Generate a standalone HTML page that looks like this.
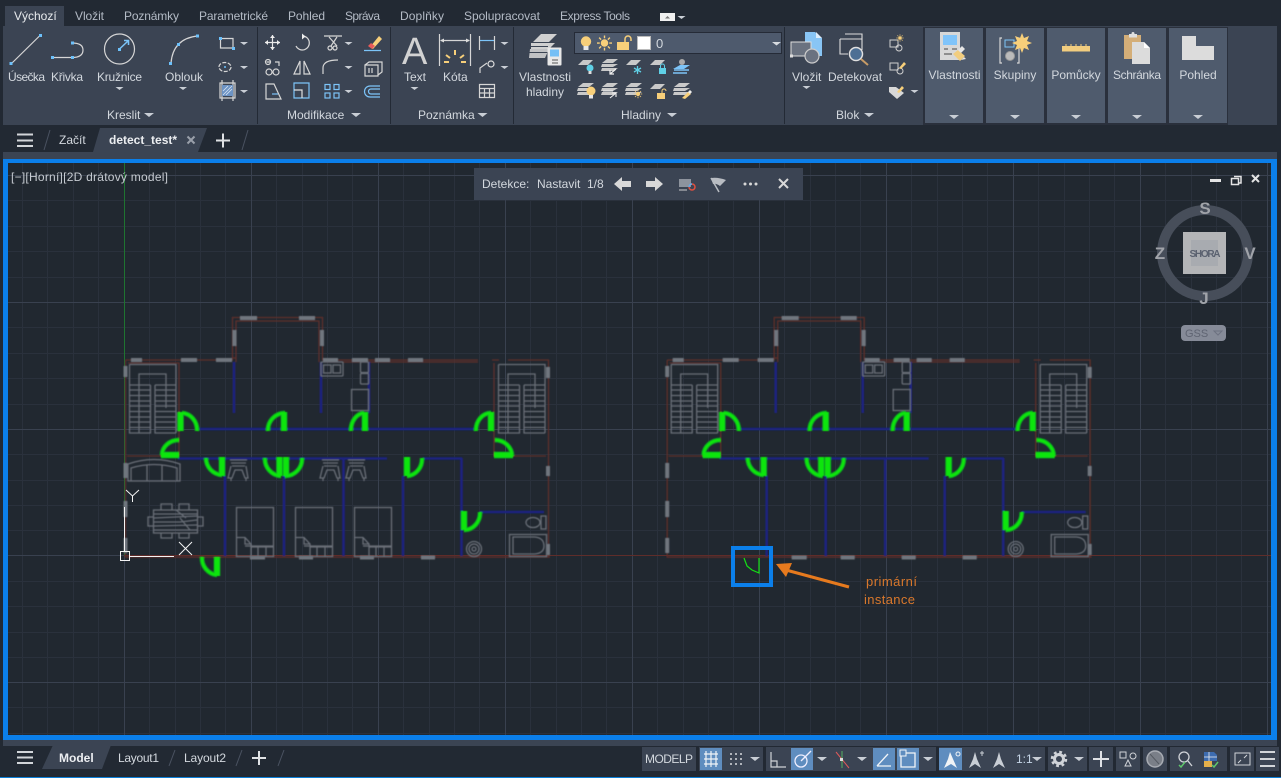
<!DOCTYPE html>
<html><head><meta charset="utf-8"><title>detect_test</title>
<style>
html,body{margin:0;padding:0;background:#222933;width:1281px;height:778px;overflow:hidden}
svg{display:block;position:absolute;left:0;top:0}
text{font-family:"Liberation Sans","DejaVu Sans",sans-serif;font-size:12px;fill:#d3d8de}
.tab{fill:#b4bbc6}
.c{text-anchor:middle}
.ic{fill:none;stroke:#d6d6d6;stroke-width:1.2}
.b{fill:none;stroke:#7cc4f8;stroke-width:1.2}
.st{fill:none;stroke:#cfd2d6;stroke-width:1.2}
</style></head><body>
<svg width="1281" height="778" viewBox="0 0 1281 778">
<defs>
<filter id="soft" x="-2%" y="-2%" width="104%" height="104%"><feGaussianBlur stdDeviation="0.4"/></filter>
<path id="car" d="M-4 0h8l-4 3z" fill="#c9ced5"/>
<path id="caw" d="M-5 0h10l-5 4z" fill="#c9ced5"/>
<g id="lay"><path d="M4 0h10l-5 5H-1z" fill="#c9c9c9"/></g>
<g id="lay3" fill="#c9c9c9"><path d="M5 0h11l-5 4H0z"/><path d="M0 5h16l-5 3H-1zM0 9h16l-5 3H-1z"/></g>
<g id="bulb"><circle cx="0" cy="0" r="4.500" fill="#f7cf7a"/><rect x="-2" y="4" width="4" height="3.500" fill="#e8e8e8"/></g>
<g id="sunm" stroke="#f7cf7a" stroke-width="1.100"><circle r="3" fill="#f7cf7a" stroke="none"/><path d="M0-6v2.200M0 6V3.800M-6 0h2.200M6 0H3.800M-4.300-4.300l1.600 1.600M4.300-4.300L2.700-2.700M-4.300 4.300l1.600-1.600M4.300 4.300L2.700 2.700"/></g>
<g id="stair" fill="none" stroke="#696e77" stroke-width="1.300">
<path d="M.5 .5H47V69M.5 .5V69H21.500V21M47 69H26V21M10 21V10H37V21M.5 21H21.500M26 21H47M10 21V69M37 21V44"/>
<path d="M.5 26H21.500M.5 31.500H21.500M.5 37H21.500M.5 42H21.500M.5 47.500H21.500M.5 53H21.500M.5 58H21.500M.5 63.500H21.500M26 26H47M26 31.500H47M26 37H47M26 42H47M26 47.500H47M26 53H47M26 58H47M26 63.500H47"/>
</g>
<g id="common">
<g fill="none" stroke="#5f2d2a" stroke-width="1.300">
<path d="M125.500 360H232.500V317.500H322.500V360H478M492 360H499M508 360H548.500V557M125.500 360V557H548.500"/>
<path d="M128 363H179V456H127M236 362V321H319V362M494 363V456H546M550 557H125"/>
<path d="M236 358H232M325 362H478"/>
</g>
<g fill="none" stroke="#1c2280" stroke-width="2.600">
<path d="M234 362V413M321 362V413M369 362V413M197 429H475M178 458.500H387M423 458.500H462M225 476V556M284 476V556M343.500 458V556M403 476V556M461.500 458V556M480 512H544"/>
</g>
<g fill="#70767e">
<rect x="131" y="358" width="11" height="4"/><rect x="181" y="358" width="16" height="4"/><rect x="216" y="358" width="16" height="4"/>
<rect x="240" y="316" width="17" height="4"/><rect x="299" y="316" width="16" height="4"/>
<rect x="232.500" y="330" width="4" height="16"/><rect x="320" y="330" width="4" height="16"/>
<rect x="123.500" y="366" width="4" height="11"/><rect x="123.500" y="463" width="4" height="15"/><rect x="123.500" y="501" width="4" height="16"/><rect x="123.500" y="538" width="4" height="15"/>
<rect x="250" y="555.500" width="15" height="4"/><rect x="299" y="555.500" width="14" height="4"/><rect x="360" y="555.500" width="14" height="4"/><rect x="421" y="555.500" width="14" height="4"/>
<rect x="323" y="358" width="15" height="4"/><rect x="352" y="358" width="16" height="4"/><rect x="375" y="358" width="15" height="4"/><rect x="408" y="358" width="15" height="4"/>
<rect x="546" y="367" width="4" height="11"/><rect x="546" y="466" width="4" height="10"/><rect x="546" y="544" width="4" height="11"/>
</g>
<use href="#stair" x="129" y="364"/><use href="#stair" x="498" y="364"/>
<g fill="none" stroke="#696e77" stroke-width="1.300">
<rect x="321" y="362" width="22" height="14" rx="1"/><rect x="323.500" y="365" width="7.500" height="8"/><rect x="333" y="365" width="7.500" height="8"/>
<rect x="360.500" y="362" width="8" height="10.500" rx="1"/><rect x="360.500" y="373.500" width="8" height="10.500" rx="1"/>
<rect x="351.500" y="389.500" width="17" height="21"/>
<rect x="541" y="516" width="5" height="13"/><ellipse cx="533" cy="522.500" rx="7" ry="5"/>
<rect x="509.500" y="534.500" width="37" height="22"/><path d="M513 537H535Q544 538 544 546Q544 553 535 554H513Z"/>
<circle cx="474" cy="549" r="7.500"/><circle cx="474" cy="549" r="5"/><circle cx="474" cy="549" r="2"/>
</g>
</g>
<path id="leaf" d="M180.500 412V431M284 412V431M161 455H179M222 457V476M279.500 457V476M286 457V476M365 412V431M491 412V431M494 455H513M407 457V476M464 511V530"/>
<path id="arc" d="M182 413A16 17 0 0 1 197 431M285 413A17 17 0 0 0 268 431M179 440A17 15 0 0 0 162 455M206 458A17 17 0 0 0 222 475M265 458A17 17 0 0 0 281 476M302 458A17 17 0 0 1 285 476M364 413A14 17 0 0 0 351 431M476 431A15 17 0 0 1 491 413M495 440A17 16 0 0 1 512 456M422 458A16 17 0 0 1 407 476M480 512A16 17 0 0 1 464 530"/>
<g id="doors" fill="none">
<use href="#arc" stroke="#0c9a22" stroke-width="5"/>
<use href="#leaf" stroke="#0c9a22" stroke-width="7"/>
<use href="#arc" stroke="#10e510" stroke-width="2.800"/>
<use href="#leaf" stroke="#10e510" stroke-width="5"/>
</g>
</defs>

<rect width="1281" height="778" fill="#222933"/>
<rect x="5" y="6" width="59" height="21" fill="#3b4453"/>
<text x="14" y="20" style="fill:#e8ebee">Výchozí</text>
<text class="tab" x="75" y="20" textLength="29">Vložit</text>
<text class="tab" x="124" y="20" textLength="55">Poznámky</text>
<text class="tab" x="199" y="20" textLength="69">Parametrické</text>
<text class="tab" x="288" y="20" textLength="37">Pohled</text>
<text class="tab" x="345" y="20" textLength="35">Správa</text>
<text class="tab" x="400" y="20" textLength="44">Doplňky</text>
<text class="tab" x="464" y="20" textLength="76">Spolupracovat</text>
<text class="tab" x="560" y="20" textLength="70">Express Tools</text>
<rect x="660" y="13" width="15" height="8" fill="#f0f0f0"/><path d="M665 18.500h5l-2.500-2.500z" fill="#777"/>
<use href="#car" x="681.500" y="16"/>

<rect x="3" y="26" width="1274" height="99" fill="#3b4453"/>
<rect x="923" y="27" width="305" height="98" fill="#2a303c"/>
<rect x="1228" y="26" width="49" height="99" fill="#3b4453"/>
<g fill="#4f5b6d"><rect x="925" y="28" width="58" height="95"/><rect x="986" y="28" width="58" height="95"/><rect x="1047" y="28" width="58" height="95"/><rect x="1108" y="28" width="58" height="95"/><rect x="1169" y="28" width="58" height="95"/></g>
<g fill="#232a35"><rect x="257" y="27" width="1" height="97"/><rect x="390" y="27" width="1" height="97"/><rect x="513" y="27" width="1" height="97"/><rect x="784" y="27" width="1" height="97"/></g>

<g class="ic"><path d="M11.500 63.500L40 35.500"/><path d="M53 57.500H72M72 43Q83 43 83 50Q83 57.500 72 57.500"/><circle cx="119.500" cy="49" r="15"/><path d="M171 63Q173 39 197 36"/></g>
<path d="M119.500 49L128 41M124 40.500h4.500v4.500" fill="none" stroke="#7cc4f8" stroke-width="1.500"/>
<g fill="#6cc0fa"><rect x="9.500" y="62" width="3" height="3"/><rect x="39" y="34" width="3" height="3"/><rect x="51" y="56" width="3" height="3"/><rect x="71" y="56" width="3" height="3"/><rect x="71" y="41.500" width="3" height="3"/><rect x="118" y="48" width="3" height="3"/><rect x="169" y="62" width="3" height="3"/><rect x="177" y="43" width="3" height="3"/><rect x="196" y="34.500" width="3" height="3"/></g>
<text x="8" y="81" textLength="37">Úsečka</text><text x="51" y="81" textLength="32">Křivka</text><text x="97" y="81" textLength="45">Kružnice</text><text x="165" y="81" textLength="38">Oblouk</text>
<use href="#car" x="119.500" y="87"/><use href="#car" x="183" y="87"/>
<path class="ic" d="M220.500 38.500H233V48H220.500Z"/><rect x="219" y="37" width="3" height="3" fill="#6cc0fa"/><rect x="232" y="47" width="3" height="3" fill="#6cc0fa"/>
<ellipse class="ic" cx="225" cy="67" rx="6" ry="4.500" stroke-dasharray="4 1.500"/><circle cx="225" cy="67" r="1" fill="#6cc0fa"/>
<path class="ic" d="M220 83H235V98H220ZM222 80V101M233 80V101"/><rect x="222" y="85" width="11" height="11" fill="#6c93c4"/><path d="M223 95l9-9M226 95l6-6M223 91l5-5" stroke="#d7e4f3" stroke-width=".8"/>
<use href="#car" x="244" y="42"/><use href="#car" x="244" y="66"/><use href="#car" x="244" y="90"/>
<text x="107" y="119">Kreslit</text><use href="#caw" x="149" y="113"/>

<g class="ic" stroke-width="1.300">
<path d="M265 42.500H280M272.500 35V50" stroke="#e8e8e8"/>
<path d="M302 36A7 7 0 1 1 296 46"/>
<path d="M324 36H342M329 37L337 46M337 37L331 46"/><circle cx="330" cy="48" r="2"/><circle cx="335" cy="48" r="2"/>
<path d="M266.500 62h4M275 62h4v4"/><circle cx="268" cy="62" r="2.500"/><circle cx="269" cy="72" r="3"/><circle cx="276" cy="72" r="3"/>
<path d="M300 74L300 61L294 74ZM304 74V61L310 74Z"/>
<path d="M323 74V68Q323 60 338 60"/>
<path d="M365 65h13v11h-13zM365 65l4-3h13v10l-4 3M369 68v5M372 68v5"/>
<path d="M266 84h8l7 15h-15z"/><path d="M272 94h6" stroke="#7cc4f8"/>
</g>
<path d="M265 42.500l3-2.500v5zM280 42.500l-3-2.500v5zM272.500 35l-2.500 3h5zM272.500 50l-2.500-3h5z" fill="#eee"/>
<path d="M302 33.500v6l3.500-3z" fill="#eee"/>
<path d="M294 83h15v15h-15z" fill="none" stroke="#7cc4f8" stroke-width="1.200"/><path d="M294 90h8v8" fill="none" stroke="#e0e0e0" stroke-width="1.200"/>
<g fill="none" stroke="#7cc4f8" stroke-width="1.200"><rect x="325" y="84.500" width="5" height="5"/><rect x="334" y="84.500" width="5" height="5"/><rect x="325" y="93" width="5" height="5"/><rect x="334" y="93" width="5" height="5"/><path d="M380 86h-10a5 5 0 0 0 0 11h10M380 89h-9a2.500 2.500 0 0 0 0 5h9"/></g>
<path d="M370 47l9-11 3 3-9 10z" fill="#f7cf7a"/><path d="M368 46l3-3 4 3-3 3z" fill="#e85a5a"/><path d="M364 50.500h17" stroke="#7cc4f8" stroke-width="1.200"/>
<use href="#car" x="348.500" y="42"/><use href="#car" x="348.500" y="66"/><use href="#car" x="348.500" y="90"/>
<text x="287" y="119">Modifikace</text><use href="#caw" x="356" y="113"/>

<text x="402" y="64" style="font-size:38px;fill:#d2d2d2">A</text>
<text x="404" y="81">Text</text><use href="#car" x="414.500" y="87"/>
<path d="M439.500 34V66M470.500 34V66M441 40.500H469" class="ic"/><path d="M440 40.500l4-2v4zM470 40.500l-4-2v4z" fill="#ddd"/>
<path d="M455 50v5M446 55l4 3M464 55l-4 3M444 62h5M461 62h5" stroke="#f7cf7a" stroke-width="2"/>
<text x="443" y="81">Kóta</text>
<path d="M479.500 36V50M494.500 36V50" class="ic"/><path d="M480 40.500H494" class="b"/>
<path d="M480 73V68L487 63" class="ic"/><circle cx="491" cy="64" r="3" fill="none" stroke="#ddd" stroke-width="1.200"/>
<path class="ic" d="M479.500 84.500H494.500V97.500H479.500ZM479.500 88.500H494.500M479.500 93H494.500M484.500 88.500V97.500M489.500 88.500V97.500"/>
<use href="#car" x="504.500" y="42"/><use href="#car" x="504.500" y="66"/>
<text x="418" y="119">Poznámka</text><use href="#caw" x="482.500" y="113"/>

<g fill="#d0d0d0"><path d="M541 34h16l-8 8h-16z"/><path d="M531 43h24l-6 6h-18z"/><path d="M530 49h19l-4 9h-16z" opacity=".9"/></g>
<path d="M529 46.500H548M529 52.500H548" stroke="#3b4453"/>
<rect x="547.500" y="47.500" width="14" height="18" rx="1" fill="#e8e8e8"/><rect x="550" y="49.500" width="9" height="7" fill="#74bff5"/><path d="M552 60h6M552 63h6" stroke="#555"/>
<text x="545" y="81" class="c">Vlastnosti</text><text x="545" y="96" class="c">hladiny</text>
<rect x="574.500" y="32.500" width="207" height="21" fill="#4e5a6d" stroke="#252b37"/>
<circle cx="586" cy="41.500" r="5.200" fill="#f7cf7a"/><rect x="583.500" y="46" width="5" height="4" fill="#e8e8e8"/>
<g transform="translate(604.500 43) scale(1.250)"><use href="#sunm"/></g>
<path d="M617 42h12v8h-12z" fill="#f7cf7a"/><path d="M625 42v-3a3 3 0 0 1 6 0v2" fill="none" stroke="#f7cf7a" stroke-width="1.500"/>
<rect x="637.500" y="36.500" width="13" height="13" fill="#fff" stroke="#bbb"/>
<text x="656" y="48" style="font-size:13px">0</text>
<path d="M772 42h9l-4.500 3.500z" fill="#d7dbe0"/>
<use href="#lay" x="579" y="60"/><circle cx="590" cy="68" r="3.500" fill="#5fd0e6"/><rect x="588.500" y="71" width="3" height="3" fill="#ddd"/>
<use href="#lay3" x="602" y="59"/><path d="M616 69l-6 5M610 70v4h4" stroke="#eee" fill="none" stroke-width="1.200"/>
<use href="#lay" x="627" y="60"/><path d="M637.500 66v8M634 68l7 4M641 68l-7 4" stroke="#5fd0e6" stroke-width="1.300"/>
<use href="#lay" x="651" y="60"/><rect x="659" y="68" width="7" height="6" fill="#5fd0e6"/><path d="M660.500 68v-2a2 2 0 0 1 4 0v2" fill="none" stroke="#5fd0e6"/>
<circle cx="682" cy="62" r="3" fill="#aaa"/><path d="M680 65h10l-6 4h-11z" fill="#7cc4f8"/><path d="M674 70h15M673 73h14" stroke="#7cc4f8" stroke-width="1.500"/>
<use href="#lay3" x="578" y="83"/><use href="#bulb" x="591" y="91"/>
<use href="#lay3" x="602" y="83"/><path d="M603 91h10M616 93l-6 5M612 93h4v4" stroke="#eee" fill="none" stroke-width="1.100"/>
<use href="#lay3" x="626" y="83"/><g transform="translate(638 94) scale(.7)"><use href="#sunm"/></g>
<use href="#lay" x="651" y="84"/><rect x="657" y="93" width="8" height="6" fill="#f7cf7a"/><path d="M662 93v-2a2 2 0 0 1 4 0" fill="none" stroke="#f7cf7a"/>
<use href="#lay3" x="674" y="83"/><path d="M682 98l6-6 3 2-6 5z" fill="#f7cf7a"/><path d="M688 92l2-2 2 2-2 2z" fill="#eee"/>
<text x="621" y="119">Hladiny</text><use href="#caw" x="672" y="113"/>

<path d="M805 32h10l7 6v18l-17 0z" fill="#88c5f5"/><path d="M816 32l6 6h-6z" fill="#dfeefb"/>
<rect x="791" y="42" width="20" height="14" fill="#6a7280" stroke="#ddd"/><circle cx="812" cy="56" r="7" fill="#6a7280" stroke="#ccc" stroke-width="1.200"/><rect x="790" y="54.500" width="3" height="3" fill="#ddd"/>
<text x="792" y="81">Vložit</text><use href="#car" x="806.500" y="86"/>
<path d="M845 34h17v16M840 39h22" fill="none" stroke="#ddd" stroke-width="1.100"/><path d="M840 39v15h8" fill="none" stroke="#ddd" stroke-width="1.100"/>
<circle cx="856" cy="54" r="6.500" fill="#4d6f94" stroke="#e0e0e0" stroke-width="1.500"/><path d="M861 59l7 6" stroke="#c79b66" stroke-width="2"/>
<text x="828" y="81">Detekovat</text>
<g fill="none" stroke="#cfcfcf"><path d="M890 40h8v7h-8zM890 63h8v7h-8z"/><circle cx="899" cy="48" r="3"/><circle cx="900" cy="71" r="3"/></g>
<g transform="translate(900 38) scale(.6)"><use href="#sunm"/></g>
<path d="M899 68l5-6 2 2-5 5z" fill="#f7cf7a"/><path d="M889 87h7l8 6-7 6-8-7z" fill="#d8d8d8"/><path d="M897 92l5-6 2 2-5 5z" fill="#f7cf7a"/>
<use href="#car" x="914.500" y="90"/>
<text x="836" y="119">Blok</text><use href="#caw" x="869" y="113"/>

<rect x="940" y="32" width="20" height="28" fill="#d8d8d8"/><rect x="943" y="35" width="14" height="10" fill="#80c4fa"/><path d="M944 49h4M952 49h5M944 54h8" stroke="#444"/><path d="M953 54l7 7 5-5-7-6z" fill="#f2cd7f"/><path d="M958 50l4-4 3 3-4 4zM961 60l3-3 2 2z" fill="#e6e6e6"/>
<path d="M1002 38h-2v25h2M1017 38h2v25h-2" class="ic"/><rect x="1005" y="40" width="9" height="7" fill="none" stroke="#7cc4f8"/><circle cx="1010" cy="56" r="4.500" fill="#bbb" stroke="#999"/>
<path d="M1022 33l2 5 5-2-2 5 5 2-5 2 2 5-5-2-2 5-2-5-5 2 2-5-5-2 5-2-2-5 5 2z" fill="#f7cf7a"/>
<rect x="1062" y="46" width="28" height="5.500" fill="#f2cd7f"/><path d="M1066 46v-2M1071 46v-2M1076 46v-2M1081 46v-2M1086 46v-2" stroke="#f2cd7f"/>
<rect x="1124" y="35" width="17" height="24" fill="#d4ae78"/><rect x="1129" y="34" width="8" height="3.500" fill="#e0e0e0"/><circle cx="1133" cy="33.500" r="1.500" fill="#e0e0e0"/><path d="M1132 42h12l6 6v16h-18z" fill="#dcdcdc"/><path d="M1144 42l6 6h-6z" fill="#fff"/>
<path d="M1182 36h14v10h18v14h-32z" fill="#dcdcdc"/>
<text x="954.500" y="79" class="c">Vlastnosti</text><text x="1015" y="79" class="c">Skupiny</text><text x="1076" y="79" class="c">Pomůcky</text><text x="1137" y="79" class="c" textLength="48">Schránka</text><text x="1198" y="79" class="c">Pohled</text>
<use href="#caw" x="954" y="115"/><use href="#caw" x="1015" y="115"/><use href="#caw" x="1076" y="115"/><use href="#caw" x="1137" y="115"/><use href="#caw" x="1198" y="115"/>

<path d="M17 134.500H33M17 140.500H33M17 146H33" stroke="#d2d5d9" stroke-width="2"/>
<path d="M44 150L50 130" stroke="#4a5261"/>
<text x="59" y="144">Začít</text>
<path d="M93 152L100 128H207L198 152Z" fill="#3b4453"/>
<text x="109" y="144" style="font-weight:bold;fill:#eceef1">detect_test*</text>
<path d="M187.500 136.500L194.500 143.500M194.500 136.500L187.500 143.500" stroke="#9aa0aa" stroke-width="2"/>
<path d="M216 140.500H230M223 133.500V147.500" stroke="#e0e2e5" stroke-width="2"/>
<path d="M242 150L248 130" stroke="#4a5261"/>

<rect x="3" y="152" width="1274" height="7" fill="#3b4453"/>
<rect x="3" y="159" width="1274" height="581" fill="#0b7fea"/>
<rect x="8" y="163" width="1263" height="572" fill="#212830"/>

<svg x="8" y="163" width="1263" height="572" viewBox="8 163 1263 572">
<path fill="none" stroke="#2a313c" d="M22.500 163V735M47.500 163V735M73.500 163V735M98.500 163V735M149.500 163V735M175.500 163V735M200.500 163V735M225.500 163V735M276.500 163V735M302.500 163V735M327.500 163V735M352.500 163V735M403.500 163V735M429.500 163V735M454.500 163V735M479.500 163V735M530.500 163V735M556.500 163V735M581.500 163V735M606.500 163V735M657.500 163V735M683.500 163V735M708.500 163V735M733.500 163V735M784.500 163V735M810.500 163V735M835.500 163V735M860.500 163V735M911.500 163V735M937.500 163V735M962.500 163V735M987.500 163V735M1038.500 163V735M1064.500 163V735M1089.500 163V735M1114.500 163V735M1165.500 163V735M1191.500 163V735M1216.500 163V735M1241.500 163V735M8 200.500H1271M8 226.500H1271M8 251.500H1271M8 277.500H1271M8 327.500H1271M8 353.500H1271M8 378.500H1271M8 404.500H1271M8 454.500H1271M8 480.500H1271M8 505.500H1271M8 530.500H1271M8 581.500H1271M8 606.500H1271M8 632.500H1271M8 657.500H1271M8 707.500H1271M8 733.500H1271"/>
<path fill="none" stroke="#39414f" d="M251.500 163V735M378.500 163V735M505.500 163V735M632.500 163V735M759.500 163V735M886.500 163V735M1013.500 163V735M1140.500 163V735M1267.500 163V735M8 175.500H1271M8 302.500H1271M8 429.500H1271M8 682.500H1271M8 555.500H124M124.500 556V735"/>
<path d="M124.500 163V556" stroke="#1f7430" fill="none"/>
<path d="M124 555.500H1271" stroke="#5f2d2a" fill="none"/>

<g filter="url(#soft)">
<use href="#common"/>
<use href="#common" x="541.700"/>
<use href="#doors"/>
<use href="#doors" x="541.700"/>
<path d="M217 557V576" stroke="#0c9a22" stroke-width="7" fill="none"/><path d="M202 557A17 17 0 0 0 217 575" stroke="#0c9a22" stroke-width="5" fill="none"/>
<path d="M217 557V576" stroke="#10e510" stroke-width="5" fill="none"/><path d="M202 557A17 17 0 0 0 217 575" stroke="#10e510" stroke-width="2.800" fill="none"/>

<g fill="none" stroke="#696e77" stroke-width="1.300">
<path d="M128 481V464Q154 455 180 464V481M128 466V481H180V466M131 481V468Q154 461 177 468V481M147 465V481M162 465V481"/>
<g id="ch"><path d="M230 460H247M231 463H246M232 466H245M231 466L228 478H232L235 470H242L245 478H248L246 466M231 478V481M246 478V481"/></g>
<use href="#ch" x="92"/><use href="#ch" x="118"/>
<rect x="153.500" y="510" width="44" height="23"/><path d="M154 514H197M154 518L197 516M154 522H180L197 520M154 526L197 525M154 530H197M176 510L186 518M180 518L190 530"/>
<path d="M161 510V504H172V510M179 510V504H189V510M161 533V538H172V533M179 533V538H189V533M153 517H148V526H153M198 517H203V526H198"/>
<g id="bed"><rect x="236.500" y="507.500" width="37" height="49"/><path d="M236.500 537.500H245L251 544V556M245 537.500V544H251M245 546H273M251 547H273M258 547V556M266 547V556"/></g>
<use href="#bed" x="59"/><use href="#bed" x="118"/>
</g>
</g>

<rect x="733" y="548" width="38" height="37" fill="none" stroke="#0b7fea" stroke-width="4"/>
<path d="M744 558L747 566L752 570L759 573V558" fill="none" stroke="#14e014" stroke-width="1.200"/>
<path d="M849 587L786 570" stroke="#e67a1e" stroke-width="3" fill="none"/><path d="M776 564L792 563L786 577Z" fill="#e67a1e"/>
<text x="866" y="586" textLength="51" style="font-size:13px;fill:#d9782c">primární</text><text x="864" y="604" textLength="51" style="font-size:13px;fill:#d9782c">instance</text>

<g fill="none" stroke="#f4f4f4" stroke-width="1">
<path d="M124.500 507V552M130 556.500H174"/><rect x="120.500" y="551.500" width="9" height="9"/>
<path d="M179 542L192 555M192 542L179 555M126 490L132.500 496L139 490M132.500 496V502"/>
</g>

<text x="11" y="181" textLength="157" style="fill:#c6cbd1">[−][Horní][2D drátový model]</text>

<rect x="1210" y="179" width="11" height="3" fill="#e4e4e4"/>
<path d="M1234 176.500h7v6.500h-2" fill="none" stroke="#e4e4e4" stroke-width="1.500"/><rect x="1231.500" y="178.500" width="7" height="6" fill="none" stroke="#e4e4e4" stroke-width="1.500"/>
<path d="M1252 175L1259 182M1259 175L1252 182" stroke="#e4e4e4" stroke-width="2"/>

<circle cx="1205" cy="253" r="43" fill="none" stroke="#474e5a" stroke-width="10"/>
<rect x="1183" y="232" width="43" height="42" fill="#b4b5b7"/><rect x="1191" y="240" width="27" height="26" fill="#a8abb0"/>
<text x="1205" y="257" class="c" textLength="31" style="font-size:10px;font-weight:bold;fill:#5b6270">SHORA</text>
<text x="1205" y="214" class="c" style="font-size:17px;font-weight:bold;fill:#a0a3a9">S</text><text x="1250" y="259" class="c" style="font-size:17px;font-weight:bold;fill:#a0a3a9">V</text><text x="1204" y="304" class="c" style="font-size:17px;font-weight:bold;fill:#a0a3a9">J</text><text x="1160" y="259" class="c" style="font-size:17px;font-weight:bold;fill:#a0a3a9">Z</text>
<rect x="1181" y="325" width="45" height="16" rx="4" fill="#868b98"/>
<text x="1185" y="337" style="font-size:11px;fill:#5f6472">GSS</text><path d="M1214 331h8l-4 4z" fill="none" stroke="#6c7180"/>

<rect x="474" y="168" width="329" height="32" fill="#3b4453"/>
<text x="482" y="188">Detekce:</text><text x="537" y="188">Nastavit</text><text x="587" y="188">1/8</text>
<path d="M614 184L622 177V181H631V187H622V191Z" fill="#d8d8d8"/>
<path d="M663 184L655 177V181H646V187H655V191Z" fill="#d8d8d8"/>
<rect x="679" y="179" width="12" height="8" fill="#8d939d"/><path d="M679 190h8" stroke="#ccc"/><circle cx="692" cy="187" r="3" fill="none" stroke="#e05040" stroke-width="1.500"/><path d="M689 187a3 3 0 0 1 3-3" stroke="#5ab0f0" stroke-width="1.500" fill="none"/>
<path d="M711 178L719 192" stroke="#b8bcc2" stroke-width="1.500"/><path d="M711 178Q718 177 726 180L720 186Q716 183 713 184Z" fill="#b8bcc2"/>
<circle cx="745" cy="184" r="1.500" fill="#d8d8d8"/><circle cx="750.500" cy="184" r="1.500" fill="#d8d8d8"/><circle cx="756" cy="184" r="1.500" fill="#d8d8d8"/>
<path d="M779 179L788 188M788 179L779 188" stroke="#d8d8d8" stroke-width="2"/>
</svg>

<rect x="3" y="740" width="1274" height="6" fill="#3b4453"/>
<rect x="0" y="746" width="1281" height="31" fill="#222933"/>
<rect x="0" y="777" width="1281" height="1" fill="#0b7fd8"/>
<path d="M17 752H33M17 757.500H33M17 763H33" stroke="#d2d5d9" stroke-width="2"/>
<path d="M42 769L53 745H111L102 769Z" fill="#3b4453"/>
<text x="59" y="762" style="font-weight:bold;fill:#eceef1">Model</text>
<text x="118" y="762" textLength="41">Layout1</text><path d="M169 766L175 750" stroke="#4a5261"/>
<text x="184" y="762" textLength="42">Layout2</text><path d="M236 766L242 750" stroke="#4a5261"/>
<path d="M252 758H266M259 751V765" stroke="#e0e2e5" stroke-width="2"/>
<path d="M278 766L284 750" stroke="#4a5261"/>

<g fill="#3b4453"><rect x="642" y="747" width="54" height="24"/><rect x="699" y="747" width="64" height="24"/><rect x="766" y="747" width="170" height="24"/><rect x="939" y="747" width="106" height="24"/><rect x="1048" y="747" width="39" height="24"/><rect x="1089" y="747" width="24" height="24"/><rect x="1116" y="747" width="24" height="24"/><rect x="1143" y="747" width="24" height="24"/><rect x="1170" y="747" width="57" height="24"/><rect x="1230" y="747" width="24" height="24"/><rect x="1256" y="747" width="23" height="24"/></g>
<g fill="#5f8dbf"><rect x="700" y="748" width="22" height="22"/><rect x="791" y="748" width="22" height="22"/><rect x="873" y="748" width="22" height="22"/><rect x="897" y="748" width="22" height="22"/><rect x="939" y="748" width="23" height="22"/></g>
<text x="645" y="763" textLength="48">MODELP</text>
<path d="M704 754H718M704 759H718M704 764H718M706 751V767M711 751V767M716 751V767" stroke="#f0f4f8" stroke-width="1.200" fill="none"/>
<g fill="#d6d9dd"><circle cx="731" cy="754" r="1"/><circle cx="736" cy="754" r="1"/><circle cx="741" cy="754" r="1"/><circle cx="731" cy="759" r="1"/><circle cx="736" cy="759" r="1"/><circle cx="741" cy="759" r="1"/><circle cx="731" cy="764" r="1"/><circle cx="736" cy="764" r="1"/><circle cx="741" cy="764" r="1"/></g>
<use href="#caw" x="755" y="757"/>
<path d="M771 752V767H786M771 761H777V767" class="st"/>
<circle cx="801" cy="761" r="6" fill="none" stroke="#eef" stroke-width="1.300"/><path d="M801 761L811 751" stroke="#eef" stroke-width="1.300"/>
<use href="#caw" x="822" y="757"/>
<path d="M836 752L849 768" stroke="#e05a5a"/><path d="M842 751V768" stroke="#55b060"/><rect x="840" y="758" width="3" height="3" fill="#ddd"/>
<use href="#caw" x="862" y="757"/>
<path d="M877 766H891M877 766L888 754" stroke="#f2f5f8" stroke-width="1.300" fill="none"/>
<path d="M901 753H915V767H901Z" fill="none" stroke="#f2f5f8" stroke-width="1.300"/><rect x="900" y="750" width="6" height="6" fill="#5f8dbf" stroke="#f2f5f8"/>
<use href="#caw" x="928" y="757"/>
<g fill="#f0f3f6"><path d="M950 752l3 7 4 9-6-4-7 4 4-9z"/><circle cx="958" cy="754" r="2" fill="none" stroke="#f0f3f6"/></g>
<path d="M975 752l2 7 4 9-6-4-6 4 4-9z" fill="#c9ced5"/><path d="M982 751v5M980 753h4" stroke="#c9ced5"/>
<path d="M999 752l2 7 4 9-6-4-6 4 4-9z" fill="#c9ced5"/>
<text x="1016" y="763" style="fill:#c5d5e6">1:1</text><use href="#caw" x="1037" y="757"/>
<circle cx="1059" cy="759" r="4.500" fill="none" stroke="#d0d3d8" stroke-width="3"/><circle cx="1059" cy="759" r="7" fill="none" stroke="#d0d3d8" stroke-width="2.500" stroke-dasharray="2.800 2.700"/><use href="#caw" x="1079" y="757"/>
<path d="M1093 759H1109M1101 751V767" stroke="#dfe1e5" stroke-width="2"/>
<rect x="1120" y="752" width="6" height="6" fill="none" stroke="#d0d3d8"/><circle cx="1133" cy="756" r="3" fill="none" stroke="#d0d3d8"/><path d="M1128 760l-3 6h6z" fill="none" stroke="#d0d3d8"/>
<circle cx="1155" cy="759" r="8" fill="#7a7f88" stroke="#a8acb3" stroke-width="1.500"/><path d="M1150 754l9 10" stroke="#555a62"/>
<circle cx="1184" cy="757" r="5" fill="none" stroke="#d0d3d8" stroke-width="1.300"/><path d="M1188 761l4 5" stroke="#d0d3d8" stroke-width="1.300"/><path d="M1179 765l2 2 4-5" stroke="#5fc66c" stroke-width="1.500" fill="none"/>
<path d="M1204 752h10l3 3v6h-13z" fill="#3d6cb0"/><rect x="1204" y="761" width="8" height="6" fill="#e5b04a"/><path d="M1209 752v9M1204 757h13" stroke="#eee" stroke-width=".8"/><path d="M1212 765l2 2 4-5" stroke="#5fc66c" stroke-width="1.500" fill="none"/>
<rect x="1235" y="753" width="15" height="12" fill="none" stroke="#d0d3d8"/><path d="M1238 763l3-3M1247 755l-3 3" stroke="#d0d3d8"/>
<path d="M1260 752H1275M1260 759H1275M1260 766H1275" stroke="#d2d5d9" stroke-width="2"/>
</svg>
</body></html>
